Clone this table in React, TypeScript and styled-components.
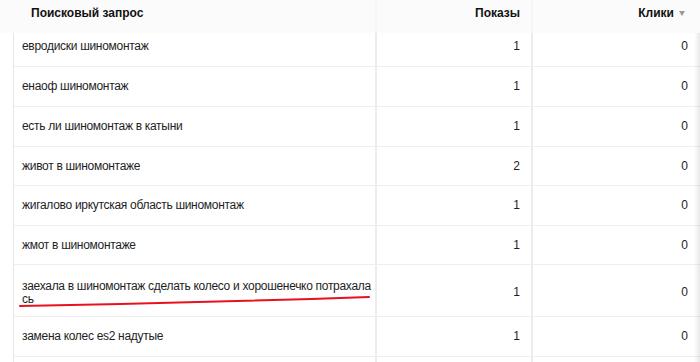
import React from "react";
import styled, { createGlobalStyle } from "styled-components";

const Global = createGlobalStyle`
  html, body { margin: 0; padding: 0; background: #fff; }
  body { font-family: "Liberation Sans", Arial, sans-serif; color: #1f1f1f; }
`;

const Page = styled.div`
  width: 700px;
  height: 362px;
  overflow: hidden;
  position: relative;
  background: #fff;
`;

const HeaderRow = styled.div`
  display: grid;
  grid-template-columns: 377px 156px 1fr;
  height: 33px;
  background: #fbfbfb;
  font-weight: bold;
  font-size: 12px;
  color: #111;
`;

const HeadCell = styled.div<{ $align?: "left" | "right"; $last?: boolean }>`
  display: flex;
  align-items: center;
  justify-content: ${(p) => (p.$align === "right" ? "flex-end" : "flex-start")};
  padding: 0 ${(p) => (p.$last ? "15px" : "11px")} 7px ${(p) => (p.$align === "right" ? "0" : "31px")};
  border-right: ${(p) => (p.$last ? "none" : "2px solid #f6f6f6")};
`;

const SortArrow = styled.span`
  display: inline-block;
  margin-left: 5px;
  width: 0;
  height: 0;
  border-left: 3.5px solid transparent;
  border-right: 3.5px solid transparent;
  border-top: 5px solid #9a9a9a;
`;

const Body = styled.div`
  margin-left: 13px;
  border-left: 1px solid #e6e6e6;
  position: relative;
  &::after {
    content: "";
    position: absolute;
    top: 0;
    right: 0;
    width: 6px;
    height: 100%;
    background: linear-gradient(to right, rgba(0,0,0,0), rgba(0,0,0,0.09));
  }
`;

const Row = styled.div<{ $h: number }>`
  display: grid;
  grid-template-columns: 363px 156px 1fr;
  height: ${(p) => p.$h}px;
  border-bottom: 1px solid #efefef;
  font-size: 12px;
  box-sizing: border-box;
`;

const Cell = styled.div<{ $num?: boolean; $last?: boolean; $offset?: number }>`
  position: relative;
  display: flex;
  align-items: center;
  justify-content: ${(p) => (p.$num ? "flex-end" : "flex-start")};
  padding-left: ${(p) => (p.$num ? "0" : "8px")};
  padding-right: ${(p) => (p.$num ? (p.$last ? "12px" : "11px") : "8px")};
  padding-top: ${(p) => Math.max(0, p.$offset ?? 0)}px;
  padding-bottom: ${(p) => Math.max(0, -(p.$offset ?? 0))}px;
  border-right: ${(p) => (p.$last ? "none" : "2px solid #ececec")};
  line-height: 13px;
  color: #1e1e1e;
  white-space: nowrap;
`;

const Query = styled.span`
  display: block;
  letter-spacing: -0.3px;
`;

const Mark = styled.svg`
  position: absolute;
  left: 0;
  top: 0;
  width: 363px;
  height: 52px;
  pointer-events: none;
`;

type R = { q: React.ReactNode; s: number; c: number; h: number; off?: number; mark?: boolean };

const rows: R[] = [
  { q: "евродиски шиномонтаж", s: 1, c: 0, h: 34, off: -6 },
  { q: "енаоф шиномонтаж", s: 1, c: 0, h: 40 },
  { q: "есть ли шиномонтаж в катыни", s: 1, c: 0, h: 40 },
  { q: "живот в шиномонтаже", s: 2, c: 0, h: 39 },
  { q: "жигалово иркутская область шиномонтаж", s: 1, c: 0, h: 40 },
  { q: "жмот в шиномонтаже", s: 1, c: 0, h: 39 },
  {
    q: (
      <>
        заехала в шиномонтаж сделать колесо и хорошенечко потрахала
        <br />
        сь
      </>
    ),
    s: 1,
    c: 0,
    h: 52,
    off: 4,
    mark: true,
  },
  { q: "замена колес es2 надутые", s: 1, c: 0, h: 40 },
  { q: "", s: 0, c: 0, h: 40 },
];

export default function App() {
  return (
    <Page>
      <Global />
      <HeaderRow>
        <HeadCell>Поисковый запрос</HeadCell>
        <HeadCell $align="right">Показы</HeadCell>
        <HeadCell $align="right" $last>
          Клики
          <SortArrow />
        </HeadCell>
      </HeaderRow>
      <Body>
        {rows.map((r, i) => (
          <Row key={i} $h={r.h}>
            <Cell $offset={r.off}>
              <Query>{r.q}</Query>
              {r.mark && (
                <Mark viewBox="0 0 363 52">
                  <path d="M6 41 Q180 38 355 32" stroke="#e8101c" strokeWidth="2" fill="none" strokeLinecap="round" />
                </Mark>
              )}
            </Cell>
            <Cell $num $offset={r.off}>{r.q !== "" ? r.s : ""}</Cell>
            <Cell $num $last $offset={r.off}>{r.q !== "" ? r.c : ""}</Cell>
          </Row>
        ))}
      </Body>
    </Page>
  );
}
